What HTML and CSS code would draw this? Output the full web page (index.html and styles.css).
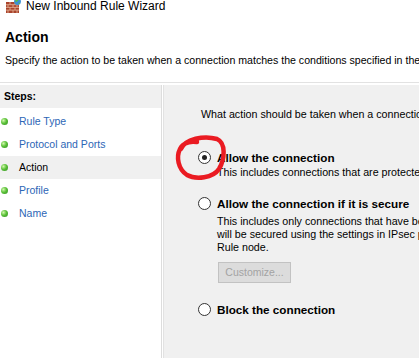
FILE: index.html
```html
<!DOCTYPE html>
<html>
<head>
<meta charset="utf-8">
<link rel="stylesheet" href="styles.css">
</head>
<body>
<div class="window">
  <div class="titlebar">
    <svg class="app-icon" width="16" height="16" viewBox="0 0 16 16">
      <rect x="1" y="4" width="13" height="11" fill="#a9432c"/>
      <g stroke="#e6b89a" stroke-width="0.8">
        <line x1="1" y1="6.7" x2="14" y2="6.7"/>
        <line x1="1" y1="9.4" x2="14" y2="9.4"/>
        <line x1="1" y1="12.1" x2="14" y2="12.1"/>
        <line x1="5" y1="4" x2="5" y2="6.7"/>
        <line x1="10" y1="4" x2="10" y2="6.7"/>
        <line x1="3" y1="6.7" x2="3" y2="9.4"/>
        <line x1="8" y1="6.7" x2="8" y2="9.4"/>
        <line x1="12" y1="6.7" x2="12" y2="9.4"/>
        <line x1="5" y1="9.4" x2="5" y2="12.1"/>
        <line x1="10" y1="9.4" x2="10" y2="12.1"/>
        <line x1="3" y1="12.1" x2="3" y2="15"/>
        <line x1="8" y1="12.1" x2="8" y2="15"/>
        <line x1="12" y1="12.1" x2="12" y2="15"/>
      </g>
      <circle cx="12.5" cy="3.5" r="3.4" fill="#3b8fd6"/>
      <path d="M10.5 2.2 C11.5 1.2 13 1.5 13.2 2.6 C12.4 3.4 11.4 3.8 10.6 4.6 Z" fill="#5fbf3a"/>
      <path d="M13.5 4.8 C14.6 4.4 15.4 5 15 5.6 C14.3 6.4 13.4 6.2 13.5 4.8 Z" fill="#5fbf3a"/>
    </svg>
    <span class="title">New Inbound Rule Wizard</span>
  </div>

  <div class="header">
    <h1 class="page-title">Action</h1>
    <p class="page-desc">Specify the action to be taken when a connection matches the conditions specified in the rule.</p>
  </div>
  <div class="separator"></div>

  <div class="main">
    <nav class="steps">
      <div class="steps-head">Steps:</div>
      <ul class="step-list">
        <li class="step"><span class="bullet"></span>Rule Type</li>
        <li class="step"><span class="bullet"></span>Protocol and Ports</li>
        <li class="step current"><span class="bullet"></span>Action</li>
        <li class="step"><span class="bullet"></span>Profile</li>
        <li class="step"><span class="bullet"></span>Name</li>
      </ul>
    </nav>

    <section class="content">
      <p class="question">What action should be taken when a connection matches the specified conditions?</p>

      <div class="option first">
        <span class="radio checked"></span>
        <span class="opt-title">Allow the connection</span>
        <span class="opt-desc">This includes connections that are protected with IPsec as well as those are not.</span>
      </div>

      <div class="option second">
        <span class="radio"></span>
        <span class="opt-title">Allow the connection if it is secure</span>
        <span class="opt-desc multi">This includes only connections that have been authenticated by using IPsec. Connections<br>will be secured using the settings in IPsec properties and rules in the Connection Security<br>Rule node.</span>
        <span class="btn-wrap"><span class="btn disabled">Customize...</span></span>
      </div>

      <div class="option third">
        <span class="radio"></span>
        <span class="opt-title">Block the connection</span>
      </div>
    </section>
  </div>

  <svg class="annotation" width="419" height="358" viewBox="0 0 419 358">
    <path d="M181 151 C185 141 204 137 217 141 C226 145 225 161 219 171 C213 180 196 182 187 177 C178 171 176 159 180 151 C183 145 190 143 197 144" fill="none" stroke="#ea1b22" stroke-width="4.5" stroke-linecap="round" stroke-linejoin="round"/>
  </svg>
</div>
</body>
</html>
```

FILE: styles.css
```css
* { box-sizing: border-box; }

html, body {
  margin: 0;
  padding: 0;
}

body {
  width: 419px;
  height: 358px;
  overflow: hidden;
  background: #ffffff;
  font-family: "Liberation Sans", Arial, sans-serif;
  font-size: 10.7px;
  line-height: 15px;
  color: #000;
  white-space: nowrap;
}

.window {
  position: relative;
  width: 419px;
  height: 358px;
}

.titlebar {
  display: flex;
  align-items: center;
  gap: 5px;
  height: 16px;
  margin-top: -2px;
  padding-left: 5px;
  font-size: 12px;
  line-height: 16px;
}

.app-icon { flex: none; display: block; }

.header {
  padding-left: 5px;
}

.page-title {
  margin: 15px 0 0 0;
  font-size: 14px;
  line-height: 16px;
  font-weight: bold;
}

.page-desc {
  margin: 8px 0 0 0;
  font-size: 10.6px;
}

.separator {
  margin-top: 14px;
  height: 1px;
  background: #e2e2e2;
}

.main {
  display: flex;
  margin-top: 2px;
  height: 273px;
}

.steps {
  flex: none;
  width: 162px;
  background: #fff;
  border-right: 1px solid #dddddd;
}

.steps-head {
  height: 23px;
  line-height: 23px;
  padding-left: 4px;
  background: #f0f0f0;
  font-weight: bold;
  font-size: 10.5px;
}

.step-list {
  list-style: none;
  margin: 2px 0 0 0;
  padding: 0;
  font-size: 10.5px;
}

.step {
  display: flex;
  align-items: center;
  height: 23px;
  padding-left: 1px;
  color: #2c66b6;
}

.step.current {
  background: #f0f0f0;
  color: #000;
}

.bullet {
  flex: none;
  width: 7px;
  height: 7px;
  margin-right: 11px;
  border-radius: 50%;
  background: radial-gradient(circle at 35% 35%, #d2f7ac 0, #5cc23a 45%, #2f8a1d 100%);
}

.content {
  flex: 1;
  margin-left: 1px;
  background: #f0f0f0;
  border-left: 1px solid #e2e2e2;
  padding: 22px 0 0 34px;
  overflow: hidden;
}

.question {
  margin: 0;
  padding-left: 3px;
}

.option {
  display: grid;
  grid-template-columns: 13px auto;
  column-gap: 6px;
  align-items: center;
}

.option.first { margin-top: 28px; }
.option.second { margin-top: 16px; }
.option.third { margin-top: 19px; }

.radio {
  position: relative;
  width: 13px;
  height: 13px;
  border: 1px solid #333;
  border-radius: 50%;
  background: #fff;
}

.radio.checked::after {
  content: "";
  position: absolute;
  left: 3px;
  top: 3px;
  width: 5px;
  height: 5px;
  border-radius: 50%;
  background: #222;
}

.opt-title {
  font-weight: bold;
  font-size: 11.7px;
}

.opt-desc {
  grid-column: 2;
}

.opt-desc.multi {
  margin-top: 4px;
  line-height: 13px;
}

.btn-wrap {
  grid-column: 2;
  padding-top: 8px;
  padding-left: 1px;
  line-height: 0;
}

.btn {
  display: inline-flex;
  align-items: center;
  justify-content: center;
  width: 73px;
  height: 21px;
  border: 1px solid #c2c2c2;
  background: #dcdcdc;
  color: #a3a3a3;
  font-size: 10.5px;
  line-height: 15px;
}

.annotation {
  position: absolute;
  left: 0;
  top: 0;
  pointer-events: none;
}
```
